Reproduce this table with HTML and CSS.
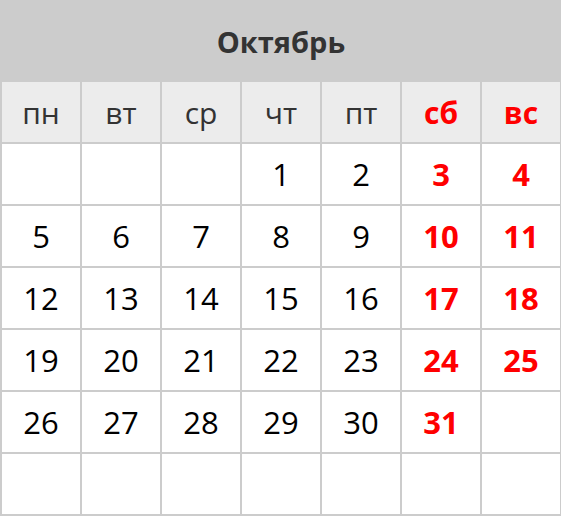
FILE: index.html
```html
<!DOCTYPE html>
<html lang="ru">
<head>
<meta charset="utf-8">
<title>Октябрь</title>
<link rel="stylesheet" href="styles.css">
</head>
<body>
<div class="calendar">
  <div class="month">Октябрь</div>
  <div class="grid">
    <div class="cell head">пн</div>
    <div class="cell head">вт</div>
    <div class="cell head">ср</div>
    <div class="cell head">чт</div>
    <div class="cell head">пт</div>
    <div class="cell head weekend">сб</div>
    <div class="cell head weekend">вс</div>

    <div class="cell"></div>
    <div class="cell"></div>
    <div class="cell"></div>
    <div class="cell">1</div>
    <div class="cell">2</div>
    <div class="cell weekend">3</div>
    <div class="cell weekend">4</div>

    <div class="cell">5</div>
    <div class="cell">6</div>
    <div class="cell">7</div>
    <div class="cell">8</div>
    <div class="cell">9</div>
    <div class="cell weekend">10</div>
    <div class="cell weekend">11</div>

    <div class="cell">12</div>
    <div class="cell">13</div>
    <div class="cell">14</div>
    <div class="cell">15</div>
    <div class="cell">16</div>
    <div class="cell weekend">17</div>
    <div class="cell weekend">18</div>

    <div class="cell">19</div>
    <div class="cell">20</div>
    <div class="cell">21</div>
    <div class="cell">22</div>
    <div class="cell">23</div>
    <div class="cell weekend">24</div>
    <div class="cell weekend">25</div>

    <div class="cell">26</div>
    <div class="cell">27</div>
    <div class="cell">28</div>
    <div class="cell">29</div>
    <div class="cell">30</div>
    <div class="cell weekend">31</div>
    <div class="cell"></div>

    <div class="cell"></div>
    <div class="cell"></div>
    <div class="cell"></div>
    <div class="cell"></div>
    <div class="cell"></div>
    <div class="cell"></div>
    <div class="cell"></div>
  </div>
</div>
</body>
</html>
```
FILE: styles.css
```css
html, body {
  margin: 0;
  padding: 0;
  background: #fff;
  overflow: hidden;
}
.calendar {
  width: 562px;
  font-family: "Open Sans", "Noto Sans", sans-serif;
}
.month {
  height: 82px;
  background: #cccccc;
  color: #333;
  font-weight: 700;
  font-size: 29px;
  display: flex;
  align-items: center;
  justify-content: center;
}
.grid {
  display: grid;
  grid-template-columns: repeat(7, 78px);
  grid-auto-rows: 60px;
  gap: 2px;
  padding: 0 2px 2px;
  background: #cccccc;
}
.cell {
  background: #fff;
  display: flex;
  align-items: center;
  justify-content: center;
  font-size: 31px;
  color: #000;
}
.cell.head {
  background: #ececec;
  color: #333;
  font-size: 30px;
}
.cell.weekend {
  color: #ff0000;
  font-weight: 700;
}
```
